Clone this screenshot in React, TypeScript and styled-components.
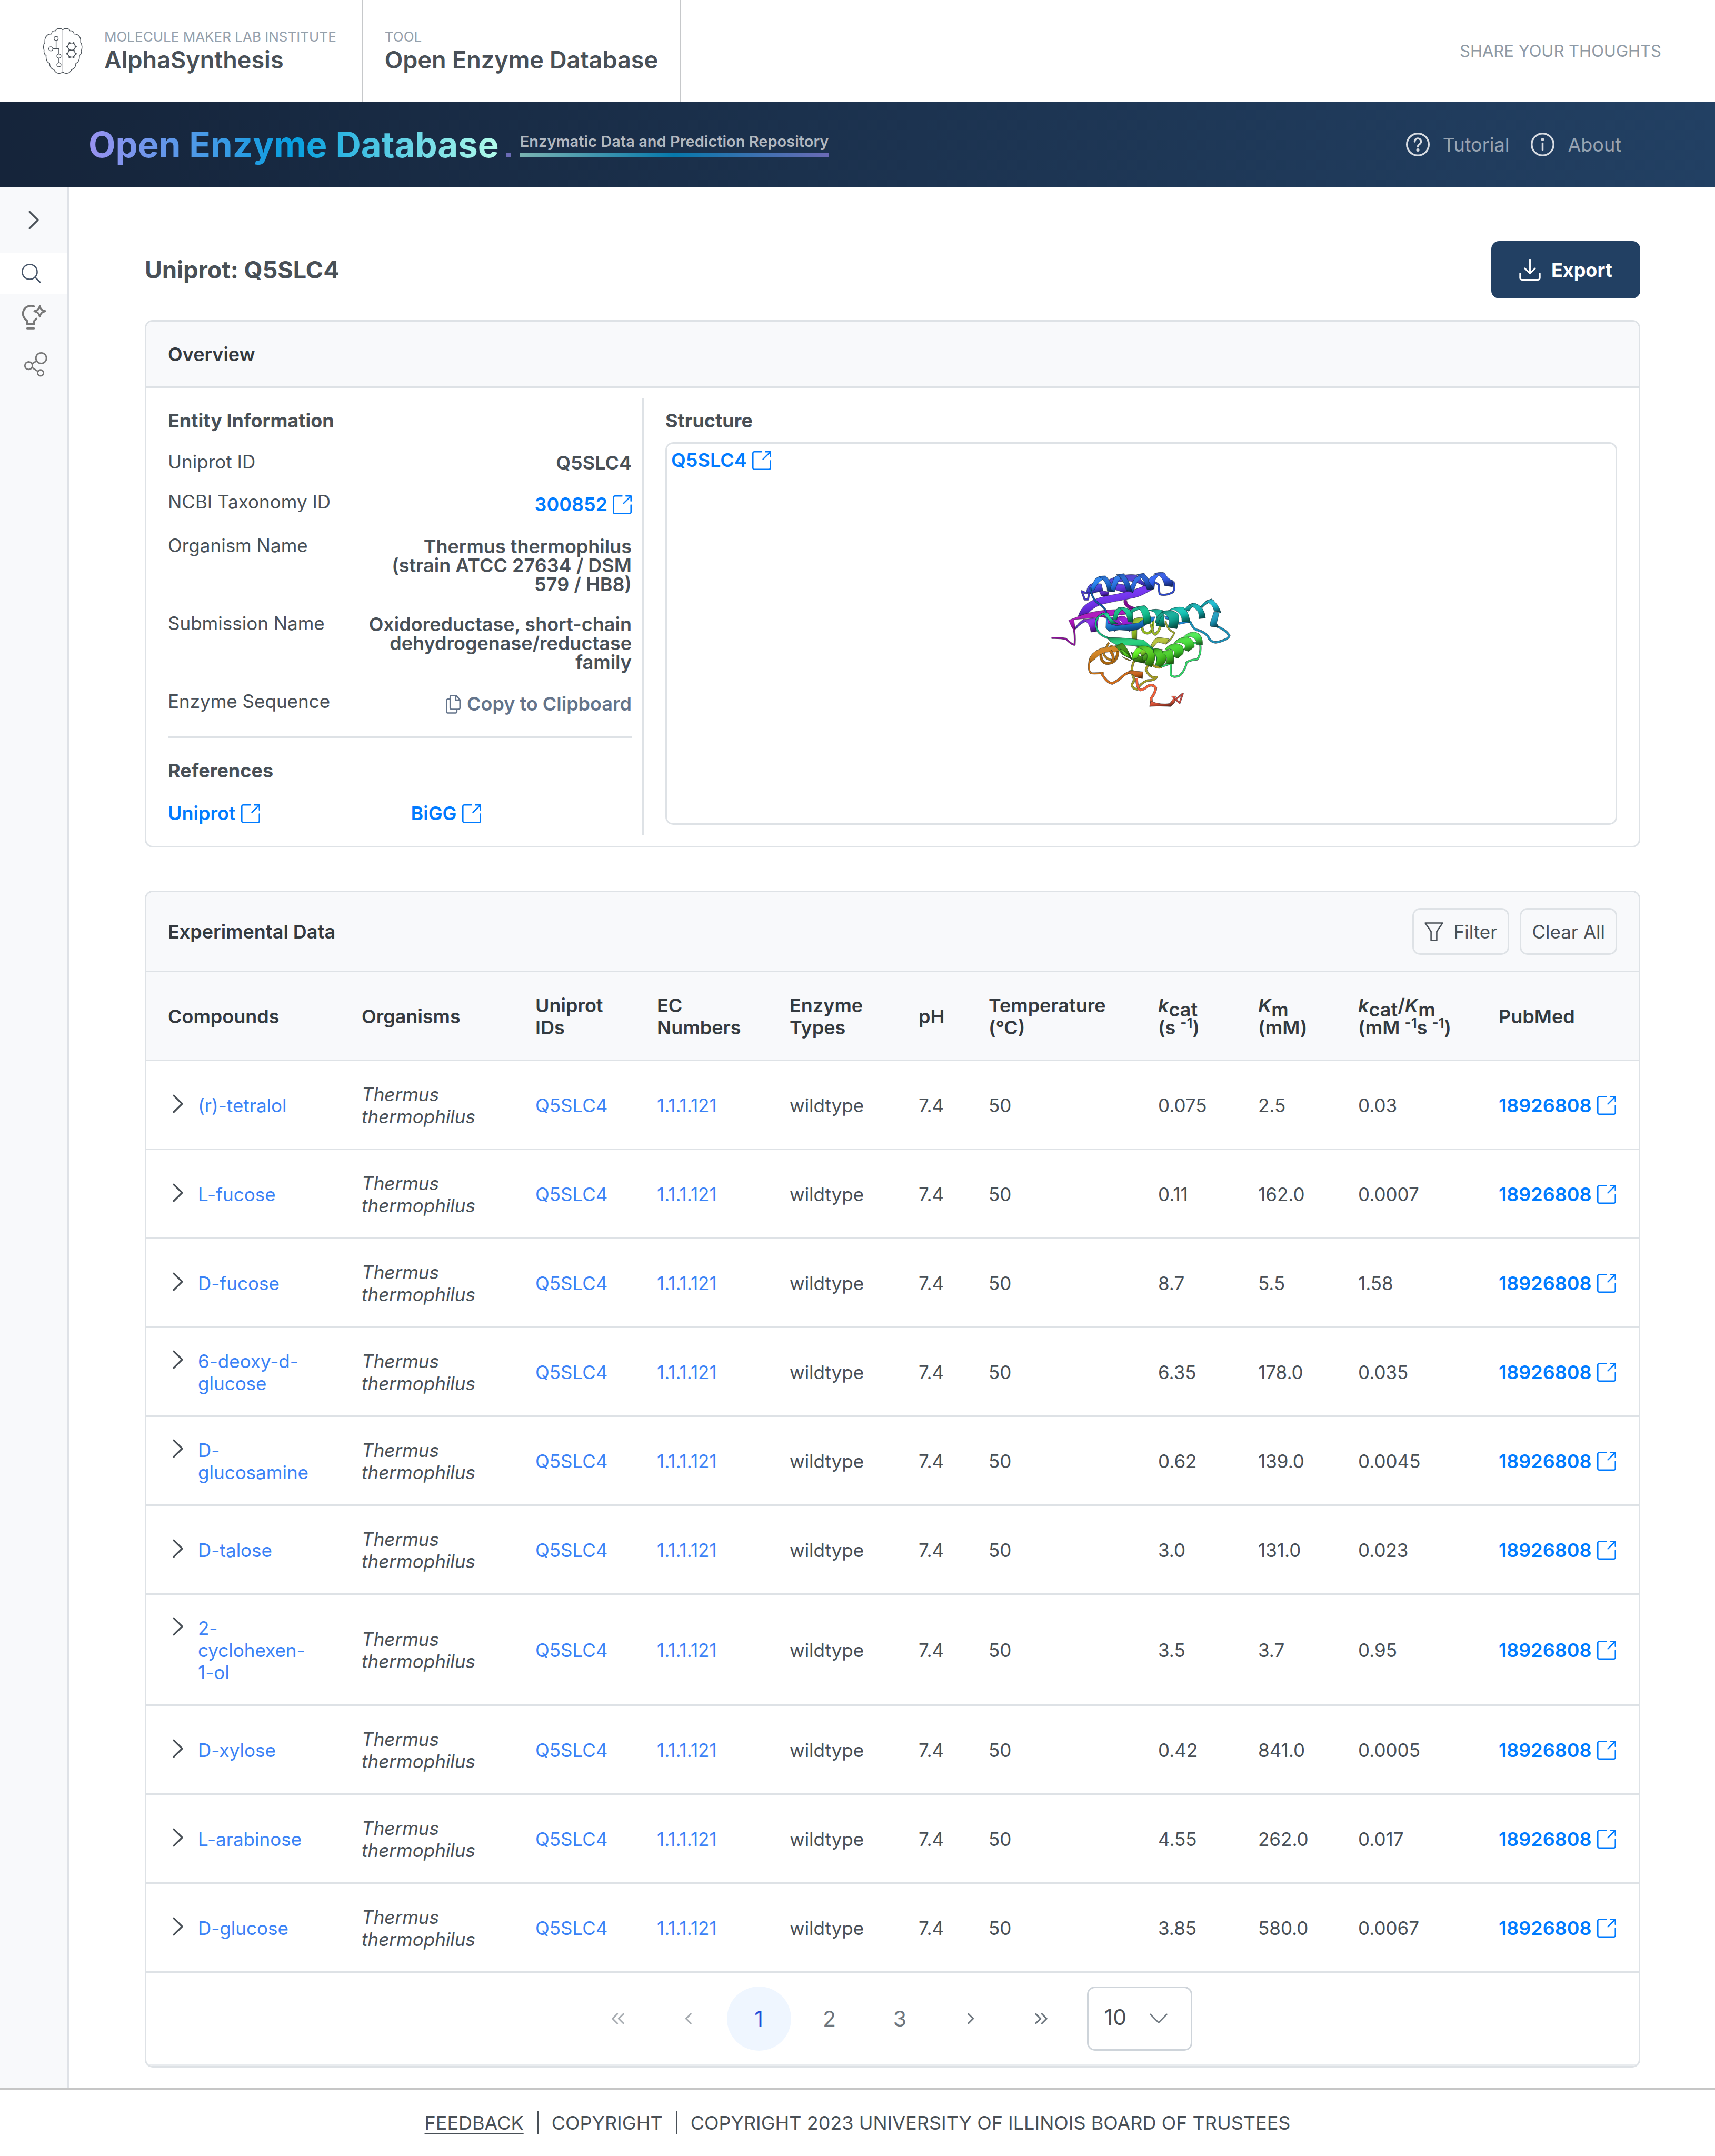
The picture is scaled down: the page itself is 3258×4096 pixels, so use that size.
import React from "react";
import styled, { createGlobalStyle } from "styled-components";

const text = "#495057";
const heading = "#343a40";
const line = "#dee2e6";
const surface = "#f8f9fb";
const linkBlue = "#007bff";
const softBlue = "#3b82f6";

const GlobalStyle = createGlobalStyle`
  * { box-sizing: border-box; }
  body {
    margin: 0;
    background: #fff;
    color: ${text};
    font-family: Inter, "Liberation Sans", sans-serif;
    font-size: 36px;
    line-height: 42px;
  }
  button, select { font: inherit; color: inherit; }
  a { color: inherit; text-decoration: none; }
  svg { display: block; flex: none; }
`;

/* ---------- icons ---------- */

const Icon = styled.svg<{ $size?: number; $stroke?: number }>`
  width: ${(p) => p.$size ?? 36}px;
  height: ${(p) => p.$size ?? 36}px;
  fill: none;
  stroke: currentColor;
  stroke-width: ${(p) => p.$stroke ?? 1};
  stroke-linecap: round;
  stroke-linejoin: round;
  overflow: visible;
`;

const ExternalIcon = () => (
  <Icon viewBox="0 0 14 14" aria-hidden="true">
    <path d="M6.8 .5H1.6A1.1 1.1 0 0 0 .5 1.6v10.8a1.1 1.1 0 0 0 1.1 1.1h10.8a1.1 1.1 0 0 0 1.1-1.1V7.2" />
    <path d="M9.8 .5h3.7v3.7M13.4 .6 8 6" />
  </Icon>
);

const SheetIcon = styled(Icon)`
  width: 28px;
`;

const CopyIcon = () => (
  <SheetIcon viewBox="0 0 11 14" aria-hidden="true">
    <path d="M4.2 .5h3.6l2.7 3.2v6a1 1 0 0 1-1 1H4.2a1 1 0 0 1-1-1V1.5a1 1 0 0 1 1-1zM7.4 .7v3.2h3" />
    <path d="M3 3.2H1.5a1 1 0 0 0-1 1v8.3a1 1 0 0 0 1 1h5.7a1 1 0 0 0 1-1V11" />
  </SheetIcon>
);

const DownloadIcon = () => (
  <Icon viewBox="0 0 14 14" $size={41} aria-hidden="true">
    <path d="M.6 9.4v2.8a1.3 1.3 0 0 0 1.3 1.3h10.2a1.3 1.3 0 0 0 1.3-1.3V9.4M7 .5v9M3.7 6.1 7 9.4l3.3-3.3" />
  </Icon>
);

const FilterIcon = () => (
  <Icon viewBox="0 0 14 14" aria-hidden="true">
    <path d="M.6 .6h12.8L9.1 6.9v6.5H4.9V6.9z" />
  </Icon>
);

const SearchIcon = () => (
  <Icon viewBox="0 0 14 14" aria-hidden="true">
    <circle cx="6" cy="6" r="5.5" />
    <path d="m10 10 3.7 3.7" />
  </Icon>
);

const BulbIcon = () => (
  <Icon viewBox="0 0 54 55" $size={47} $stroke={4.4} aria-hidden="true">
    <path d="M27 3.5C14 -1 2.5 8 2.5 20c0 7 4 12 9.5 16v7h15.5v-7l5-5" />
    <path d="M12 52.4h15M40 3c1.5 7 4.5 10 12 11.3C44.5 16 41.5 19 40 26c-1.5-7-4.5-10-12-11.7C35.5 13 38.5 10 40 3z" />
  </Icon>
);

const NetworkIcon = () => (
  <Icon viewBox="-4 -1 52 55" $size={47} $stroke={3.3} aria-hidden="true">
    <circle cx="38" cy="13.5" r="11.7" />
    <circle cx="10.2" cy="30.2" r="8.4" />
    <circle cx="36.7" cy="46.3" r="6.6" />
    <path d="m17.5 26 11-6.5M18 34.5l13 8.5" />
  </Icon>
);

const QuestionIcon = () => (
  <Icon viewBox="0 0 18 18" $size={45} $stroke={1.4} aria-hidden="true">
    <circle cx="9" cy="9" r="8.3" />
    <path d="M6.6 6.8a2.4 2.3 0 1 1 3.9 1.7c-.9.7-1.5 1-1.5 2.2" />
    <circle cx="9" cy="13.2" r=".5" fill="currentColor" />
  </Icon>
);

const InfoIcon = () => (
  <Icon viewBox="0 0 18 18" $size={45} $stroke={1.4} aria-hidden="true">
    <circle cx="9" cy="9" r="8.3" />
    <path d="M9 8.2v5" />
    <circle cx="9" cy="5.2" r=".4" fill="currentColor" />
  </Icon>
);

const ChevronRight = () => (
  <Icon viewBox="0 0 14 14" $stroke={1.3} aria-hidden="true">
    <path d="M3.9 .9 10.1 7l-6.2 6.1" />
  </Icon>
);

const pageGlyphs = {
  first: "M6.5 3.5 3 7l3.5 3.5M11 3.5 7.5 7l3.5 3.5",
  prev: "M8.7 3.5 5.2 7l3.5 3.5",
  next: "M5.3 3.5 8.8 7l-3.5 3.5",
  last: "M3 3.5 6.5 7 3 10.5M7.5 3.5 11 7l-3.5 3.5",
};

const BrainLogo = styled.svg`
  width: 75px;
  height: 88px;
  fill: none;
  stroke: ${text};
  stroke-width: 5;
`;

const hexDots = [
  [215, 139], [242, 139], [257, 163], [242, 187], [215, 187], [200, 163],
  [257, 211], [242, 234], [215, 234], [200, 211],
];
const brainHalf =
  "M169 48C150 34 126 40 119 56C103 53 93 62 92 77C78 77 68 80 61 89C48 100 46 116 48 133C36 150 37 174 42 187C40 204 45 217 56 223C54 248 62 270 80 277C80 300 92 316 109 319C121 347 152 352 169 334";

const Brain = () => (
  <BrainLogo viewBox="36 36 268 314" role="img" aria-label="AlphaSynthesis logo">
    <path d={brainHalf} />
    <path d={brainHalf} transform="matrix(-1 0 0 1 338 0)" />
    <path d="M169 48v286" strokeWidth="3" />
    <circle cx="124" cy="107" r="14" />
    <circle cx="88" cy="178" r="14" />
    <circle cx="143" cy="227" r="14" />
    <circle cx="143" cy="286" r="14" />
    <path d="M124 121v57M102 178h41v35M143 241v31" />
    <path d="M215 139h27l15 24-15 24h-27l-15-24zM215 187l-15 24 15 23h27l15-23-15-24" />
    {hexDots.map(([x, y]) => (
      <circle key={`${x}-${y}`} cx={x} cy={y} r="7" fill={text} stroke="none" />
    ))}
  </BrainLogo>
);

/* ---------- protein ribbon drawing ---------- */

type Piece = { d: string; c: string; w?: number };

const protein: Piece[] = [
  // indigo helix behind the blue one
  { d: "M545 205C600 175 680 162 735 170L790 225L850 268L800 252C740 220 700 190 560 232z", c: "#4a3bd6" },
  { d: "M590 225L700 245L690 300L560 260z", c: "#5a2fe0" },
  { d: "M480 270L550 285L545 310L500 312z", c: "#5a25c8" },
  { d: "M368 280L388 335L410 335L418 290L390 290z", c: "#4436cc", w: 14 },
  { d: "M400 285Q405 235 440 228L500 230L510 275L430 298z", c: "#4640e0" },
  // violet and magenta strands
  { d: "M345 445C370 370 430 335 540 310C640 295 730 270 790 243L845 268C800 290 760 320 700 328C620 345 580 350 530 362C470 372 420 410 405 440z", c: "#6f2cf2" },
  { d: "M662 340Q655 385 735 402", c: "#7c0a8c", w: 24 },
  { d: "M320 530Q345 490 380 468L410 478Q350 500 330 535z", c: "#5a28c8" },
  { d: "M380 470L450 462L480 458L468 550L430 555Q420 490 385 478z", c: "#8824e6" },
  { d: "M500 450L600 455L640 500L590 550L545 515L530 460z", c: "#8f18cc" },
  { d: "M600 460Q640 435 665 455L712 500L692 552L640 525Q650 480 610 470z", c: "#9a14d8" },
  { d: "M280 475L345 450C420 415 520 405 620 402L740 396L700 432C600 440 430 462 370 466L315 470L325 540L305 530z", c: "#ac0cbc" },
  { d: "M312 520Q325 570 320 640Q300 640 262 600Q220 592 165 594", c: "#8c0e9a", w: 13 },
  // olive helix and loops
  { d: "M715 470Q740 450 785 460L770 490L740 500L738 605L706 600Q700 520 712 500z", c: "#98c421" },
  { d: "M775 490Q765 560 810 562Q850 558 848 480", c: "#8fb41e", w: 18 },
  { d: "M835 500Q845 570 862 570Q890 555 900 500", c: "#9cb826", w: 18 },
  { d: "M932 480Q940 540 990 558Q985 590 935 630", c: "#a0a828", w: 12 },
  { d: "M830 655Q850 595 885 590L955 600L935 637L880 622Q850 650 842 670z", c: "#b4c234" },
  { d: "M722 745Q695 800 712 850Q730 880 705 905Q705 935 742 940Q760 900 810 880Q860 880 872 858Q830 870 800 810Q800 780 840 770Q870 800 905 790", c: "#a39a22", w: 16 },
  { d: "M640 720L700 745L690 748L660 735zM880 670L910 670L905 700L890 740z", c: "#b08c1c" },
  // orange helix
  { d: "M550 625Q530 660 515 700Q530 740 580 745", c: "#b07a18", w: 15 },
  { d: "M497 690Q490 765 545 765Q605 760 610 690Q600 660 560 650", c: "#a8660f", w: 20 },
  { d: "M415 755Q418 695 500 662L600 645L622 680L590 690Q510 676 458 735L420 765z", c: "#d2801a" },
  { d: "M560 680Q590 720 575 750", c: "#b86c12", w: 20 },
  { d: "M420 750Q408 825 435 832Q470 834 515 828", c: "#cc7414", w: 13 },
  { d: "M500 830Q535 895 572 900Q610 885 645 850Q680 820 720 820", c: "#d06c18", w: 17 },
  { d: "M690 812L780 822L776 868L725 855Q710 830 680 835z", c: "#cc6016" },
  // red tail
  { d: "M737 865Q740 935 762 944Q790 940 812 918Q845 900 866 930Q865 960 835 1000L838 1035", c: "#ee6038", w: 18 },
  { d: "M832 1020Q900 1045 960 1035L985 1000L970 985L1000 985L992 1030L965 1055L880 1052L824 1055z", c: "#f05a3c" },
  { d: "M985 992L1026 1032L1048 968L995 1012", c: "#c4443a", w: 12 },
  // blue strand
  { d: "M535 430L545 495L600 512Q700 500 750 492L800 455L862 452L850 480L800 505Q760 540 700 545L620 540L550 550L530 525z", c: "#1a7cd8" },
  { d: "M425 255Q435 330 480 362Q535 395 532 430", c: "#1058a8", w: 14 },
  { d: "M925 445L975 460L970 475L930 465z", c: "#1a88d8" },
  { d: "M1020 497L1095 482", c: "#1c88d8", w: 16 },
  { d: "M1095 480Q1120 540 1150 542Q1210 560 1225 600Q1250 630 1280 622Q1355 605 1360 578Q1330 530 1250 508", c: "#1a90b8", w: 16 },
  // blue helix, left to right
  { d: "M430 250L460 195Q490 175 520 178L530 192Q480 205 455 268L435 280z", c: "#2080f4" },
  { d: "M480 180L528 176Q560 205 588 285L540 280Q540 230 505 195z", c: "#1c6cd8" },
  { d: "M588 285L560 262L585 190Q610 165 655 162L640 182L612 215z", c: "#2474ea" },
  { d: "M600 168L652 162Q690 215 712 290L668 272Q650 210 625 185z", c: "#1c60d0" },
  { d: "M712 290L695 250L725 190L790 158L770 190L742 215z", c: "#2468e4" },
  { d: "M738 168L786 158Q828 205 855 265L808 270Q790 210 765 185z", c: "#2058d0" },
  { d: "M855 265L815 210L830 185L895 155L880 180L862 202z", c: "#2c60fa" },
  { d: "M850 165Q890 145 925 156Q945 200 985 210L978 250L925 242Q915 190 885 172z", c: "#3058ea" },
  { d: "M985 215Q1000 275 975 290Q930 312 892 300Q885 270 885 235L862 220", c: "#2c48d0", w: 14 },
  // sea green strand
  { d: "M495 428L545 425Q560 470 612 498L565 503Q545 455 510 432z", c: "#12dc94" },
  { d: "M520 428Q455 450 463 510Q470 560 515 582L570 605", c: "#12b87c", w: 14 },
  { d: "M540 592Q620 590 690 598L785 608L845 660L872 700L840 692Q800 655 760 648L600 640L560 618z", c: "#1cd078" },
  // teal helix
  { d: "M575 470L590 410Q620 385 655 388L640 402Q612 425 602 475z", c: "#10b880" },
  { d: "M610 388Q680 382 710 425L712 490L678 485Q675 420 630 400z", c: "#10c890" },
  { d: "M690 412Q730 378 790 378L775 398Q722 408 705 430z", c: "#0cb488" },
  { d: "M735 385L790 376Q830 400 835 495L785 505Q785 430 755 400z", c: "#0cc490" },
  { d: "M820 408Q870 392 915 410L928 522L868 512Q885 440 850 418z", c: "#0cb898" },
  { d: "M862 490Q870 440 920 412L935 420Q890 450 885 500z", c: "#0a9c80" },
  { d: "M905 418Q970 395 1015 430Q1030 470 1008 532L945 522Q975 470 930 435z", c: "#0cac98" },
  { d: "M950 410Q990 380 1052 388Q1085 410 1097 490L1042 485Q1045 430 990 405z", c: "#0ec8b8" },
  { d: "M1060 402Q1085 365 1125 358L1140 375Q1102 385 1088 415z", c: "#0ca4a0" },
  { d: "M1090 370L1125 358Q1195 385 1200 460L1155 465Q1165 410 1110 382z", c: "#10b4b8" },
  { d: "M1165 385Q1190 345 1240 332L1260 345Q1212 352 1180 390z", c: "#0fa0ac" },
  { d: "M1200 345L1242 332Q1285 365 1305 425L1258 412Q1255 375 1212 352z", c: "#16bcd2" },
  { d: "M1258 415L1292 425L1275 495L1290 522L1235 517Q1226 500 1240 470z", c: "#1a9cc0" },
  // green helix
  { d: "M870 690L885 770", c: "#0c8c5c", w: 20 },
  { d: "M1120 625L1165 640Q1172 700 1145 738Q1090 742 1072 760Q1070 800 1030 845Q990 865 968 845Q965 800 968 765L900 788", c: "#30dc68", w: 14 },
  { d: "M595 650L640 626Q670 650 707 738L640 705z", c: "#3c8c10" },
  { d: "M625 668Q660 675 705 738L660 715z", c: "#52cc18" },
  { d: "M700 690L770 720L812 690L790 765L718 750z", c: "#3a8a14" },
  { d: "M750 670L800 660L810 710L770 715z", c: "#80d428" },
  { d: "M705 738Q708 675 760 650L800 652Q752 690 740 732z", c: "#62fa22" },
  { d: "M775 735Q780 690 850 680L860 700Q810 710 805 755z", c: "#44a018" },
  { d: "M730 655Q810 630 852 680Q875 730 838 790L792 770Q830 700 780 672z", c: "#54d01c" },
  { d: "M850 668Q900 655 935 705Q945 760 898 790L862 775Q890 720 852 695z", c: "#44c81e" },
  { d: "M910 685L975 668Q992 720 985 770L932 766Q955 720 915 700z", c: "#44d024" },
  { d: "M925 675Q955 625 1015 634Q1065 645 1050 700L1015 732L982 718Q1010 680 960 668z", c: "#40d82c" },
  { d: "M985 635Q1015 585 1080 588Q1130 610 1125 655L1085 685L1052 672Q1085 640 1030 625z", c: "#44e038" },
  { d: "M1050 590Q1080 552 1130 553Q1185 570 1180 640L1138 636Q1145 600 1100 585z", c: "#48ec50" },
];

const ProteinSvg = styled.svg`
  width: 424px;
  height: 339px;
`;

const Protein = () => (
  <ProteinSvg viewBox="18 -36 1500 1200" role="img" aria-label="Ribbon model of Q5SLC4">
    <defs>
      <linearGradient id="shade" x1="0.2" y1="0" x2="0.6" y2="1">
        <stop offset="0" stopColor="#000" stopOpacity="0.25" />
        <stop offset="0.35" stopColor="#fff" stopOpacity="0.06" />
        <stop offset="0.65" stopColor="#000" stopOpacity="0.12" />
        <stop offset="1" stopColor="#000" stopOpacity="0.55" />
      </linearGradient>
    </defs>
    {protein.map((p) =>
      p.w ? (
        <g key={p.d} fill="none" strokeLinejoin="round">
          <path d={p.d} stroke="#1a1a22" strokeOpacity="0.75" strokeWidth={p.w} />
          <path d={p.d} stroke={p.c} strokeWidth={p.w - 4} />
        </g>
      ) : (
        <g key={p.d} strokeLinejoin="round">
          <path d={p.d} fill={p.c} />
          <path d={p.d} fill="url(#shade)" stroke="#0a1a20" strokeOpacity="0.6" strokeWidth="3" />
        </g>
      ),
    )}
  </ProteinSvg>
);

/* ---------- header and banner ---------- */

const Header = styled.header`
  display: flex;
  height: 193px;
  padding-right: 102px;
`;

const Brand = styled.a<{ $first?: boolean }>`
  display: flex;
  align-items: center;
  gap: 41px;
  padding: ${(p) => (p.$first ? "0 48px 0 82px" : "0 41px")};
  border-right: 3px solid #c6c8ca;
`;

const BrandText = styled.span`
  display: flex;
  flex-direction: column;
`;

const Eyebrow = styled.span`
  font-size: 26px;
  line-height: 34px;
  color: #95a0ab;
`;

const BrandName = styled.span`
  font-size: 45px;
  line-height: 54px;
  font-weight: 600;
`;

const Share = styled.a`
  margin: auto 0 auto auto;
  font-size: 31px;
  color: #8f9aa5;
`;

const Banner = styled.div`
  display: flex;
  align-items: center;
  height: 163px;
  padding: 0 178px 0 168px;
  background: linear-gradient(90deg, #15243a, #224063);
`;

const BannerTitle = styled.a`
  font-size: 67px;
  line-height: 82px;
  font-weight: 700;
  background: linear-gradient(90deg, #9a92f0, #069fdf 50%, #b2fdea);
  background-clip: text;
  -webkit-background-clip: text;
  color: transparent;
`;

const Tagline = styled.div`
  display: flex;
  align-items: flex-end;
  gap: 18px;
  margin-left: 14px;
`;

const Dot = styled.span`
  width: 8px;
  height: 8px;
  background: #6b6bb5;
`;

const TaglineText = styled.span`
  padding-bottom: 12px;
  font-size: 29px;
  line-height: 37px;
  font-weight: 600;
  color: #b1b7bf;
  background: linear-gradient(90deg, #7ab3b1, #0678ac 50%, #6b6bb5) bottom / 100% 8px no-repeat;
`;

const BannerNav = styled.nav`
  display: flex;
  gap: 41px;
  margin-left: auto;
`;

const BannerLink = styled.a`
  display: flex;
  align-items: center;
  gap: 25px;
  color: #97a3b1;
  svg { color: #d7dbe1; }
`;

/* ---------- page frame ---------- */

const Shell = styled.div`
  display: flex;
`;

const Sidebar = styled.nav`
  display: flex;
  flex-direction: column;
  flex: none;
  width: 132px;
  background: ${surface};
  border-right: 5px solid #dfe2e7;
`;

const SideToggle = styled.button`
  display: grid;
  place-items: center;
  height: 124px;
  padding: 0;
  border: 0;
  background: none;
`;

const SideLink = styled.a<{ $active?: boolean }>`
  padding: 21px 41px;
  color: ${(p) => (p.$active ? "#475569" : "#777")};
  background: ${(p) => (p.$active ? "#fff" : "transparent")};
`;

const Main = styled.main`
  flex: 1;
  min-width: 0;
  padding: 102px 142px 39px 143px;
`;

const TitleRow = styled.div`
  display: flex;
  align-items: center;
  justify-content: space-between;
  margin-bottom: 41px;
`;

const PageTitle = styled.h1`
  margin: 0;
  font-size: 45px;
  line-height: 54px;
  font-weight: 700;
`;

const ExportButton = styled.button`
  display: flex;
  align-items: center;
  gap: 20px;
  height: 109px;
  padding: 0 53px;
  border: 0;
  border-radius: 15px;
  background: #224063;
  color: #fff;
  font-weight: 700;
`;

const Card = styled.section`
  overflow: hidden;
  border: 3px solid ${line};
  border-radius: 15px;
  & + & { margin-top: 82px; }
`;

const CardHeader = styled.div<{ $tall?: boolean }>`
  display: flex;
  align-items: center;
  gap: 20px;
  height: ${(p) => (p.$tall ? 152 : 126)}px;
  padding: 0 41px;
  background: ${surface};
  border-bottom: 3px solid ${line};
`;

const CardTitle = styled.h2`
  margin: 0 auto 0 0;
  font-size: 36px;
  line-height: 44px;
  font-weight: 600;
  color: ${heading};
`;

/* ---------- overview ---------- */

const OverviewGrid = styled.div`
  display: grid;
  grid-template-columns: 1fr 2fr;
  gap: 41px;
  padding: 20px 41px;
`;

const EntityColumn = styled.div`
  display: flex;
  flex-direction: column;
  gap: 38px;
  padding: 20px 20px 20px 0;
  border-right: 3px solid ${line};
`;

const SubHeading = styled.h3`
  margin: 0;
  font-size: 36px;
  line-height: 44px;
  font-weight: 700;
`;

const Facts = styled.dl`
  display: flex;
  flex-direction: column;
  gap: 38px;
  margin: 0;
`;

const Fact = styled.div`
  display: flex;
  justify-content: space-between;
  gap: 41px;
`;

const FactLabel = styled.dt`
  flex: none;
  font-size: 35px;
  line-height: 36px;
`;

const FactValue = styled.dd`
  max-width: 509px;
  margin: 0;
  padding-top: 2px;
  line-height: 36px;
  font-weight: 600;
  text-align: right;
`;

const ExternalLink = styled.a`
  display: inline-flex;
  align-items: center;
  gap: 10px;
  font-size: 36px;
  line-height: 43px;
  font-weight: 600;
  white-space: nowrap;
  vertical-align: top;
  color: ${linkBlue};
`;

const CopyButton = styled.button`
  display: flex;
  align-items: center;
  gap: 12px;
  padding: 0;
  border: 0;
  background: none;
  line-height: 43px;
  font-weight: 600;
  color: #64748b;
`;

const Rule = styled.hr`
  width: 100%;
  height: 3px;
  margin: 2px 0;
  border: 0;
  background: ${line};
`;

const References = styled.div`
  display: grid;
  grid-template-columns: 1fr 1fr;
  gap: 42px;
`;

const StructureColumn = styled.div`
  display: flex;
  flex-direction: column;
  gap: 19px;
  padding: 20px 0;
`;

const Viewer = styled.div`
  position: relative;
  display: grid;
  place-items: center;
  flex: 1;
  border: 3px solid ${line};
  border-radius: 15px;
`;

const ViewerLabel = styled.div`
  position: absolute;
  top: 10px;
  left: 8px;
`;

/* ---------- table ---------- */

const ToolButton = styled.button`
  display: flex;
  align-items: center;
  gap: 20px;
  height: 89px;
  padding: 0 20px;
  border: 3px solid ${line};
  border-radius: 15px;
  background: transparent;
  font-size: 35px;
`;

const Table = styled.table`
  width: 100%;
  table-layout: fixed;
  border-collapse: separate;
  border-spacing: 0;
  th, td {
    padding: 42px 41px 40px;
    border-bottom: 3px solid ${line};
    text-align: left;
    vertical-align: middle;
  }
  td { font-size: 35px; }
  th {
    background: ${surface};
    color: ${heading};
    font-weight: 600;
  }
  sub {
    font-size: 36px;
    line-height: 0;
    vertical-align: -8px;
  }
  sup {
    font-size: 26px;
    line-height: 0;
    vertical-align: 12px;
  }
`;

const Compound = styled.div`
  display: flex;
  gap: 19px;
  color: ${softBlue};
`;

const Expand = styled.button`
  display: grid;
  place-items: center;
  flex: none;
  width: 38px;
  height: 36px;
  padding: 0;
  border: 0;
  background: none;
  color: ${text};
`;

const CellLink = styled.a`
  color: ${softBlue};
`;

const Pager = styled.nav`
  display: flex;
  justify-content: center;
  gap: 12px;
  padding: 26px 14px 26px 0;
  border-bottom: 3px solid #e9ecef;
`;

const PageButton = styled.button<{ $current?: boolean }>`
  display: grid;
  place-items: center;
  width: 122px;
  height: 122px;
  padding: 0;
  border: 0;
  border-radius: 50%;
  font-size: 41px;
  background: ${(p) => (p.$current ? "#eff6ff" : "none")};
  color: ${(p) => (p.$current ? "#1d4ed8" : "#6c757d")};
  &:disabled { opacity: 0.6; }
`;

const SelectWrap = styled.label`
  position: relative;
  display: block;
  margin-left: 14px;
`;

const PageSize = styled.select`
  width: 200px;
  height: 122px;
  padding: 0 0 6px 30px;
  border: 3px solid #ced4da;
  border-radius: 15px;
  appearance: none;
  background: #fff;
  font-size: 41px;
`;

const SelectArrow = styled.span`
  position: absolute;
  top: 43px;
  right: 46px;
  color: #6c757d;
  pointer-events: none;
`;

const Footer = styled.footer`
  display: flex;
  justify-content: center;
  gap: 25px;
  padding: 41px;
  border-top: 3px solid #c6c6c6;
  line-height: 44px;
`;

const FooterItem = styled.span`
  padding-left: 25px;
  border-left: 3px solid ${text};
`;

const FooterLink = styled.a`
  text-decoration: underline;
  text-decoration-thickness: 3px;
  text-underline-offset: 6px;
`;

const columns = [368, 330, 231, 252, 245, 133, 322, 190, 190, 267, 308];

const rows = [
  ["(r)-tetralol", "0.075", "2.5", "0.03"],
  ["L-fucose", "0.11", "162.0", "0.0007"],
  ["D-fucose", "8.7", "5.5", "1.58"],
  ["6-deoxy-d-glucose", "6.35", "178.0", "0.035"],
  ["D-glucosamine", "0.62", "139.0", "0.0045"],
  ["D-talose", "3.0", "131.0", "0.023"],
  ["2-cyclohexen-1-ol", "3.5", "3.7", "0.95"],
  ["D-xylose", "0.42", "841.0", "0.0005"],
  ["L-arabinose", "4.55", "262.0", "0.017"],
  ["D-glucose", "3.85", "580.0", "0.0067"],
];

const Ext = ({ children }: { children: React.ReactNode }) => (
  <ExternalLink href="#">
    {children}
    <ExternalIcon />
  </ExternalLink>
);

const PageArrow = ({ kind, disabled }: { kind: keyof typeof pageGlyphs; disabled?: boolean }) => (
  <PageButton disabled={disabled} aria-label={`${kind} page`}>
    <Icon viewBox="0 0 14 14" $stroke={1.2}>
      <path d={pageGlyphs[kind]} />
    </Icon>
  </PageButton>
);

export default function App() {
  return (
    <>
      <GlobalStyle />
      <Header>
        <Brand href="#" $first>
          <Brain />
          <BrandText>
            <Eyebrow>MOLECULE MAKER LAB INSTITUTE</Eyebrow>
            <BrandName>AlphaSynthesis</BrandName>
          </BrandText>
        </Brand>
        <Brand href="#">
          <BrandText>
            <Eyebrow>TOOL</Eyebrow>
            <BrandName>Open Enzyme Database</BrandName>
          </BrandText>
        </Brand>
        <Share href="#">SHARE YOUR THOUGHTS</Share>
      </Header>

      <Banner>
        <BannerTitle href="#">Open Enzyme Database</BannerTitle>
        <Tagline>
          <Dot />
          <TaglineText>Enzymatic Data and Prediction Repository</TaglineText>
        </Tagline>
        <BannerNav>
          <BannerLink href="#"><QuestionIcon />Tutorial</BannerLink>
          <BannerLink href="#"><InfoIcon />About</BannerLink>
        </BannerNav>
      </Banner>

      <Shell>
        <Sidebar aria-label="Sections">
          <SideToggle aria-label="Expand sidebar"><ChevronRight /></SideToggle>
          <SideLink href="#" $active aria-label="Search"><SearchIcon /></SideLink>
          <SideLink href="#" aria-label="Predict"><BulbIcon /></SideLink>
          <SideLink href="#" aria-label="Pathways"><NetworkIcon /></SideLink>
        </Sidebar>

        <Main>
          <TitleRow>
            <PageTitle>Uniprot: Q5SLC4</PageTitle>
            <ExportButton><DownloadIcon />Export</ExportButton>
          </TitleRow>

          <Card>
            <CardHeader><CardTitle>Overview</CardTitle></CardHeader>
            <OverviewGrid>
              <EntityColumn>
                <SubHeading>Entity Information</SubHeading>
                <Facts>
                  <Fact>
                    <FactLabel>Uniprot ID</FactLabel>
                    <FactValue>Q5SLC4</FactValue>
                  </Fact>
                  <Fact>
                    <FactLabel>NCBI Taxonomy ID</FactLabel>
                    <FactValue><Ext>300852</Ext></FactValue>
                  </Fact>
                  <Fact>
                    <FactLabel>Organism Name</FactLabel>
                    <FactValue>Thermus thermophilus (strain ATCC 27634 / DSM 579 / HB8)</FactValue>
                  </Fact>
                  <Fact>
                    <FactLabel>Submission Name</FactLabel>
                    <FactValue>Oxidoreductase, short-chain dehydrogenase/reductase family</FactValue>
                  </Fact>
                  <Fact>
                    <FactLabel>Enzyme Sequence</FactLabel>
                    <FactValue>
                      <CopyButton><CopyIcon />Copy to Clipboard</CopyButton>
                    </FactValue>
                  </Fact>
                </Facts>
                <Rule />
                <SubHeading>References</SubHeading>
                <References>
                  <Ext>Uniprot</Ext>
                  <Ext>BiGG</Ext>
                </References>
              </EntityColumn>
              <StructureColumn>
                <SubHeading>Structure</SubHeading>
                <Viewer>
                  <Protein />
                  <ViewerLabel><Ext>Q5SLC4</Ext></ViewerLabel>
                </Viewer>
              </StructureColumn>
            </OverviewGrid>
          </Card>

          <Card>
            <CardHeader $tall>
              <CardTitle>Experimental Data</CardTitle>
              <ToolButton><FilterIcon />Filter</ToolButton>
              <ToolButton>Clear All</ToolButton>
            </CardHeader>
            <Table>
              <colgroup>
                {columns.map((w, i) => <col key={i} style={{ width: w }} />)}
              </colgroup>
              <thead>
                <tr>
                  <th>Compounds</th>
                  <th>Organisms</th>
                  <th>Uniprot IDs</th>
                  <th>EC Numbers</th>
                  <th>Enzyme Types</th>
                  <th>pH</th>
                  <th>Temperature (°C)</th>
                  <th><i>k</i><sub>cat</sub><br />(s <sup>-1</sup>)</th>
                  <th><i>K</i><sub>m</sub><br />(mM)</th>
                  <th><i>k</i><sub>cat</sub>/<i>K</i><sub>m</sub><br />(mM <sup>-1</sup>s <sup>-1</sup>)</th>
                  <th>PubMed</th>
                </tr>
              </thead>
              <tbody>
                {rows.map(([name, kcat, km, ratio]) => (
                  <tr key={name}>
                    <td>
                      <Compound>
                        <Expand aria-label={`Expand ${name}`}><ChevronRight /></Expand>
                        <CellLink href="#">{name}</CellLink>
                      </Compound>
                    </td>
                    <td><i>Thermus thermophilus</i></td>
                    <td><CellLink href="#">Q5SLC4</CellLink></td>
                    <td><CellLink href="#">1.1.1.121</CellLink></td>
                    <td>wildtype</td>
                    <td>7.4</td>
                    <td>50</td>
                    <td>{kcat}</td>
                    <td>{km}</td>
                    <td>{ratio}</td>
                    <td><Ext>18926808</Ext></td>
                  </tr>
                ))}
              </tbody>
            </Table>
            <Pager aria-label="Pages">
              <PageArrow kind="first" disabled />
              <PageArrow kind="prev" disabled />
              <PageButton $current aria-current="page">1</PageButton>
              <PageButton>2</PageButton>
              <PageButton>3</PageButton>
              <PageArrow kind="next" />
              <PageArrow kind="last" />
              <SelectWrap>
                <PageSize aria-label="Rows per page" defaultValue="10">
                  <option>10</option>
                  <option>25</option>
                  <option>50</option>
                </PageSize>
                <SelectArrow>
                  <Icon viewBox="0 0 14 14">
                    <path d="M1 3.8 7 10l6-6.2" />
                  </Icon>
                </SelectArrow>
              </SelectWrap>
            </Pager>
          </Card>
        </Main>
      </Shell>

      <Footer>
        <FooterLink href="#">FEEDBACK</FooterLink>
        <FooterItem>COPYRIGHT</FooterItem>
        <FooterItem>COPYRIGHT 2023 UNIVERSITY OF ILLINOIS BOARD OF TRUSTEES</FooterItem>
      </Footer>
    </>
  );
}
